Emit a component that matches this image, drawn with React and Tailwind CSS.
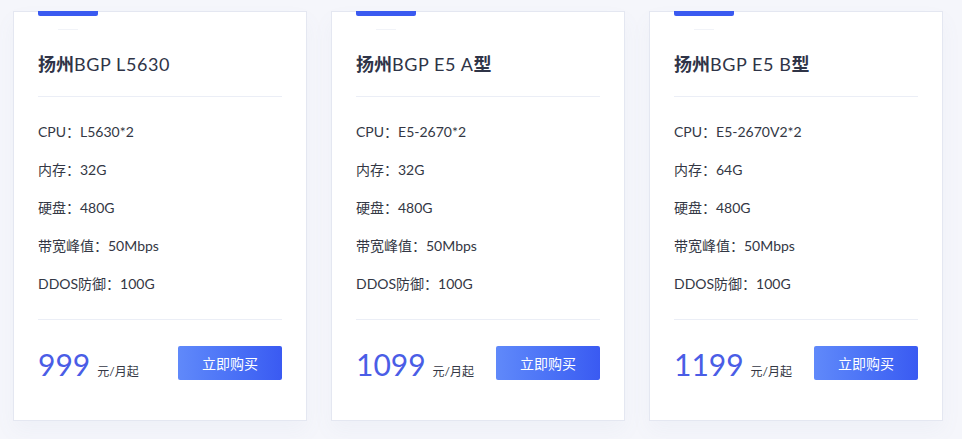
import React from "react";

const plans = [
  {
    name: ["扬州", "BGP L5630", ""],
    cpu: "L5630*2",
    ram: "32G",
    price: "999",
  },
  {
    name: ["扬州", "BGP E5 A", "型"],
    cpu: "E5-2670*2",
    ram: "32G",
    price: "1099",
  },
  {
    name: ["扬州", "BGP E5 B", "型"],
    cpu: "E5-2670V2*2",
    ram: "64G",
    price: "1199",
  },
];

function PlanCard({ plan }) {
  const specs = [
    ["CPU：", plan.cpu],
    ["内存：", plan.ram],
    ["硬盘：", "480G"],
    ["带宽峰值：", "50Mbps"],
    ["DDOS防御：", "100G"],
  ];

  return (
    <div className="relative w-[294px] bg-white border border-[#e4e7f1] shadow-[0_10px_20px_rgba(120,130,180,0.05)] px-[24px] pt-[39px] pb-[40px]">
      {/* top accent */}
      <div className="absolute left-[24px] -top-px w-[60px] h-[5px] rounded-b-[2px] bg-[#3a5af0]" />
      <div className="absolute left-[44px] top-[17px] w-[20px] h-px bg-[#f1f3f8]" />

      <h3 className="text-[18px] leading-[26px] text-[#2f3447] tracking-[0.6px]">
        <span className="font-bold tracking-normal">{plan.name[0]}</span>
        <span>{plan.name[1]}</span>
        <span className="font-bold">{plan.name[2]}</span>
      </h3>
      <div className="mt-[19px] h-px bg-[#ebeef6]" />

      <ul className="mt-[25px] flex flex-col gap-[18px]">
        {specs.map(([label, value]) => (
          <li key={label} className="text-[14px] leading-[20px] text-[#333744]">
            {label}
            {value}
          </li>
        ))}
      </ul>

      <div className="mt-[25px] h-px bg-[#ebeef6]" />

      <div className="mt-[26px] h-[34px] flex items-start justify-between">
        <div className="mt-[3px] flex items-baseline">
          <span className="text-[30px] leading-[31px] text-[#4a5de6]">{plan.price}</span>
          <span className="ml-[7px] text-[12px] text-[#333744]">元/月起</span>
        </div>
        <button className="w-[104px] h-[34px] rounded-[2px] bg-gradient-to-r from-[#6089fa] to-[#3a5af2] text-white text-[14px]">
          立即购买
        </button>
      </div>
    </div>
  );
}

export default function App() {
  return (
    <div
      className="w-[962px] h-[439px] overflow-hidden bg-[#f5f6fb] pl-[13px] pt-[11px]"
      style={{ fontFamily: '"Lato", "Noto Sans CJK SC", sans-serif' }}
    >
      <div className="flex gap-[24px]">
        {plans.map((p) => (
          <PlanCard key={p.price} plan={p} />
        ))}
      </div>
    </div>
  );
}
